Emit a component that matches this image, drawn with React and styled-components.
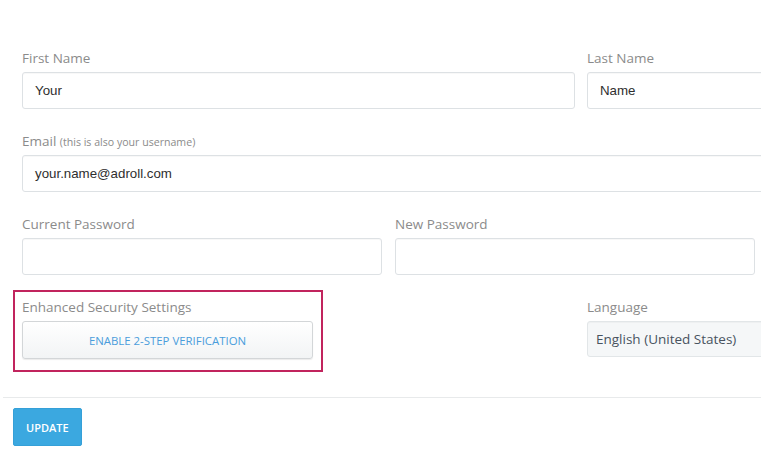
import styled, { createGlobalStyle } from "styled-components";

const GlobalStyle = createGlobalStyle`
  html, body {
    margin: 0;
    padding: 0;
    background: #ffffff;
    overflow: hidden;
  }
`;

const Page = styled.div`
  width: 761px;
  height: 457px;
  overflow: hidden;
  font-family: "Open Sans", "Liberation Sans", sans-serif;
`;

const Form = styled.div`
  width: 1100px;
  padding: 49px 0 0 22px;
  display: flex;
  flex-direction: column;
  gap: 23px;
`;

const Row = styled.div`
  display: grid;
  grid-template-columns: ${(p) => p.$cols || "553px 1fr"};
  column-gap: ${(p) => p.$gap || "12px"};
  align-items: start;
`;

const Field = styled.div`
  display: flex;
  flex-direction: column;
`;

const Label = styled.label`
  display: block;
  height: 18px;
  font-size: 13.5px;
  line-height: 18px;
  color: #8b8b8b;
  margin-bottom: 5px;
  white-space: nowrap;
`;

const Hint = styled.span`
  font-size: 10.6px;
  line-height: 1;
  color: #8b8b8b;
`;

const Input = styled.div`
  box-sizing: border-box;
  height: 37px;
  border: 1px solid #dde1e4;
  border-radius: 3px;
  box-shadow: inset 0 1px 1px rgba(0, 0, 0, 0.03);
  padding: 0 12px;
  display: flex;
  align-items: center;
  font-family: "Liberation Sans", Arial, sans-serif;
  font-size: 13.3px;
  color: #2e2e2e;
  background: #fff;
`;

const Select = styled(Input)`
  height: 36px;
  padding: 0 8px;
  background: #f5f7f8;
  border-color: #e2e6e8;
  font-family: "Open Sans", "Liberation Sans", sans-serif;
  font-size: 13.5px;
  color: #48535f;
`;

const Highlight = styled.div`
  box-sizing: border-box;
  width: 310px;
  margin: -8px 0 0 -9px;
  border: 2px solid #c1245d;
  padding: 6px 8px 11px 7px;
  display: flex;
  flex-direction: column;
`;

const SecondaryButton = styled.button`
  box-sizing: border-box;
  height: 38px;
  width: 100%;
  border: 1px solid #d3d6d8;
  border-radius: 3px;
  background: linear-gradient(#ffffff, #f2f4f5);
  box-shadow: 0 1px 1px rgba(0, 0, 0, 0.08);
  font-family: "Open Sans", "Liberation Sans", sans-serif;
  font-size: 11.4px;
  color: #4a9ddc;
  text-transform: uppercase;
  cursor: pointer;
`;

const Divider = styled.div`
  height: 1px;
  background: #e8eaeb;
  margin: 25px 0 0 3px;
`;

const Footer = styled.div`
  padding: 10px 0 0 13px;
`;

const PrimaryButton = styled.button`
  height: 38px;
  padding: 0 12px;
  border: 1px solid #35a0d8;
  border-radius: 2px;
  background: #3ba8e0;
  color: #ffffff;
  font-family: "Open Sans", "Liberation Sans", sans-serif;
  font-weight: 600;
  font-size: 11px;
  text-transform: uppercase;
  cursor: pointer;
`;

export default function App() {
  return (
    <Page>
      <GlobalStyle />
      <Form>
        <Row>
          <Field>
            <Label>First Name</Label>
            <Input>Your</Input>
          </Field>
          <Field>
            <Label>Last Name</Label>
            <Input>Name</Input>
          </Field>
        </Row>

        <Row $cols="1fr">
          <Field>
            <Label>
              Email <Hint>(this is also your username)</Hint>
            </Label>
            <Input>your.name@adroll.com</Input>
          </Field>
        </Row>

        <Row $cols="360px 360px" $gap="13px">
          <Field>
            <Label>Current Password</Label>
            <Input />
          </Field>
          <Field>
            <Label>New Password</Label>
            <Input />
          </Field>
        </Row>

        <Row>
          <Highlight>
            <Label>Enhanced Security Settings</Label>
            <SecondaryButton>Enable 2-Step Verification</SecondaryButton>
          </Highlight>
          <Field>
            <Label>Language</Label>
            <Select>English (United States)</Select>
          </Field>
        </Row>
      </Form>
      <Divider />
      <Footer>
        <PrimaryButton>Update</PrimaryButton>
      </Footer>
    </Page>
  );
}
